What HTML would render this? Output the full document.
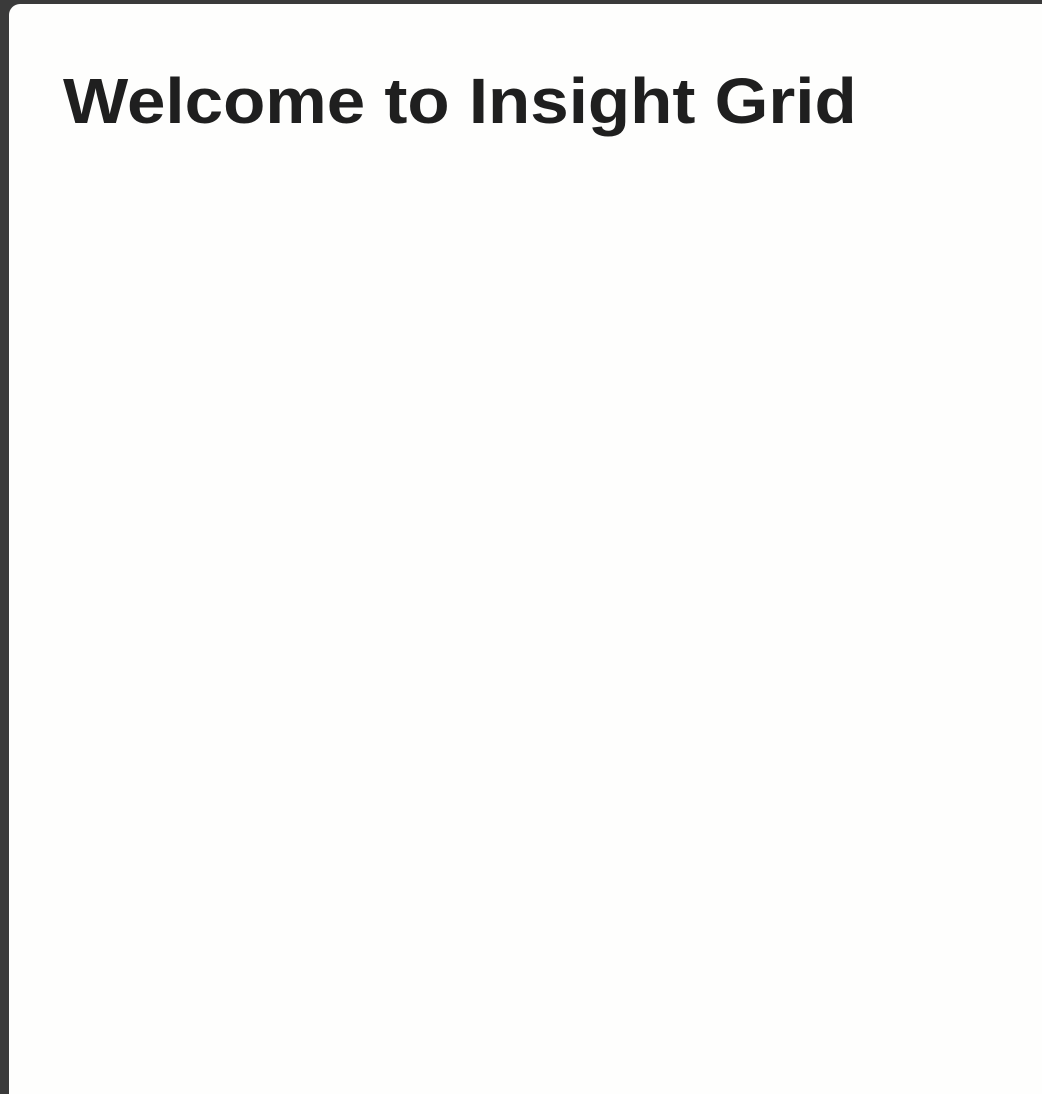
<!DOCTYPE html>
<html><head><style>
html,body{margin:0;padding:0;width:1042px;height:1080px;overflow:hidden;background:#3a3a3a;}
.panel{position:absolute;left:9px;top:4px;width:1040px;height:1090px;background:#fefefd;border-top-left-radius:11px;}
h1{position:absolute;left:54px;top:59px;margin:0;font-family:"Liberation Sans",sans-serif;font-weight:bold;font-size:64px;line-height:76px;color:#1f1f1f;letter-spacing:0;white-space:nowrap;transform:scaleX(1.08);transform-origin:0 0;}
</style></head><body>
<div class="panel"><h1>Welcome to Insight Grid</h1></div>
</body></html>
